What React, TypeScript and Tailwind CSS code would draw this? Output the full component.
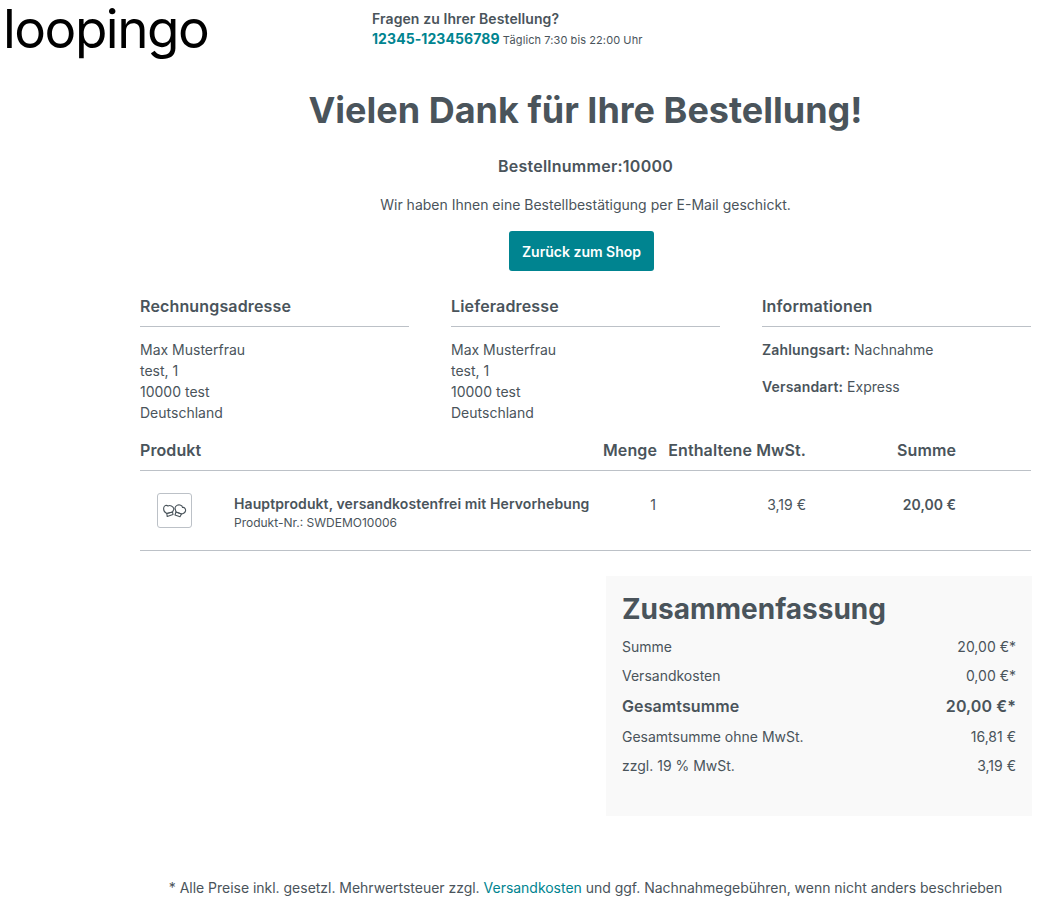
import React from "react";

function Mittens() {
  return (
    <svg viewBox="0 0 24 14" className="h-[14px] w-[24px]" fill="none" stroke="#4a545b" strokeWidth="1.1" strokeLinejoin="round" strokeLinecap="round">
      <path d="M3.8 9.5 C1.5 8.5 0.3 6 0.8 3.5 C1.2 1.5 3.5 0.8 5 2 C7 0.8 10 2 11 5 L9.5 8 Z" />
      <path d="M3.8 9.5 L9.5 8 L10 10.5 L4.2 12.5 Z" />
      <path d="M13 8 L12 4 C12.5 1.5 15 0.5 17 1 C19 1.5 19.5 3 19.5 3.5 C21.5 3 23 5 22.5 7 C22 9 19.5 10 18.5 10 Z" />
      <path d="M13 8 L18.5 10 L17 12.8 L12 11 Z" />
    </svg>
  );
}

function Address({ title }: { title: string }) {
  return (
    <div>
      <h3 className="border-b border-[#bcc1c7] pb-[8px] text-[16px] leading-[24px] font-semibold tracking-[0.15px]">{title}</h3>
      <div className="mt-[12px] text-[14px] leading-[21px]">
        <p>Max Musterfrau</p>
        <p>test, 1</p>
        <p>10000 test</p>
        <p>Deutschland</p>
      </div>
    </div>
  );
}

function SummaryRow({ label, value }: { label: string; value: string }) {
  return (
    <div className="flex h-[29px] items-center justify-between text-[14px]">
      <span>{label}</span>
      <span>{value}</span>
    </div>
  );
}

export default function App() {
  return (
    <div className="h-[905px] overflow-hidden bg-white text-[#4a545b]" style={{ fontFamily: "Inter, sans-serif" }}>
      {/* header */}
      <div className="flex h-[70px]">
        <div className="ml-[3px] w-[369px] text-[53px] leading-[58px] font-normal tracking-[-1.5px] text-black">
          loopingo
        </div>
        <div className="pt-[8px]">
          <p className="text-[14px] leading-[21px] font-semibold tracking-[0.09px]">Fragen zu Ihrer Bestellung?</p>
          <p className="text-[11px] leading-[20px] tracking-[0.09px]">
            <a className="text-[14px] font-bold tracking-[0.08px] text-[#008490]">12345-123456789</a> Täglich 7:30 bis 22:00 Uhr
          </p>
        </div>
      </div>

      <div className="ml-[140px] w-[891px]">
        {/* thanks */}
        <div className="text-center">
          <h1 className="mt-[16px] text-[36px] leading-[48px] font-bold">Vielen Dank für Ihre Bestellung!</h1>
          <p className="mt-[20px] text-[16px] leading-[24px] font-semibold tracking-[0.25px]">Bestellnummer:10000</p>
          <p className="mt-[16px] text-[14px] leading-[21px]">Wir haben Ihnen eine Bestellbestätigung per E-Mail geschickt.</p>
          <a className="mt-[16px] mr-[8px] inline-flex h-[40px] w-[145px] items-center justify-center rounded-[3px] bg-[#008490] text-[14px] font-semibold text-white">
            Zurück zum Shop
          </a>
        </div>

        {/* addresses */}
        <div className="mt-[23px] grid grid-cols-3 gap-[42px]">
          <Address title="Rechnungsadresse" />
          <Address title="Lieferadresse" />
          <div>
            <h3 className="border-b border-[#bcc1c7] pb-[8px] text-[16px] leading-[24px] font-semibold tracking-[0.15px]">Informationen</h3>
            <p className="mt-[12px] text-[14px] leading-[21px]">
              <b className="font-semibold tracking-[0.15px]">Zahlungsart:</b> Nachnahme
            </p>
            <p className="mt-[16px] text-[14px] leading-[21px]">
              <b className="font-semibold tracking-[0.15px]">Versandart:</b> Express
            </p>
          </div>
        </div>

        {/* products */}
        <div className="mt-[15px] grid h-[33px] grid-cols-[463px_54px_149px_150px_75px] border-b border-[#bcc1c7] text-[16px] leading-[24px] font-semibold tracking-[0.1px]">
          <span className="col-span-1">Produkt</span>
          <span className="text-right whitespace-nowrap">Menge</span>
          <span className="text-right whitespace-nowrap">Enthaltene MwSt.</span>
          <span className="text-right">Summe</span>
        </div>
        <div className="grid h-[80px] grid-cols-[463px_54px_149px_150px_75px] items-center border-b border-[#bcc1c7] text-[14px]">
          <div className="flex items-center">
            <div className="ml-[17px] flex h-[35px] w-[35px] items-center justify-center rounded-[3px] border border-[#bcc1c7]">
              <Mittens />
            </div>
            <div className="ml-[42px] pt-[3px] whitespace-nowrap">
              <p className="leading-[21px] font-semibold tracking-[0.1px]">Hauptprodukt, versandkostenfrei mit Hervorhebung</p>
              <p className="text-[12px] leading-[17px]">Produkt-Nr.: SWDEMO10006</p>
            </div>
          </div>
          <span className="mb-[13px] pr-[1px] text-right">1</span>
          <span className="mb-[13px] text-right">3,19 €</span>
          <span className="mb-[13px] text-right font-semibold">20,00 €</span>
        </div>

        {/* summary */}
        <div className="mt-[25px] ml-[466px] h-[240px] w-[426px] bg-[#f9f9f9] px-[16px] pt-[16px]">
          <h2 className="text-[28px] leading-[34px] font-bold">Zusammenfassung</h2>
          <div className="mt-[6px]">
            <SummaryRow label="Summe" value="20,00 €*" />
            <SummaryRow label="Versandkosten" value="0,00 €*" />
            <div className="flex h-[32px] items-center justify-between text-[16px] font-semibold tracking-[0.1px]">
              <span>Gesamtsumme</span>
              <span>20,00 €*</span>
            </div>
            <SummaryRow label="Gesamtsumme ohne MwSt." value="16,81 €" />
            <SummaryRow label="zzgl. 19 % MwSt." value="3,19 €" />
          </div>
        </div>

        {/* footer note */}
        <p className="mt-[61px] text-center text-[14px] leading-[21px] tracking-[-0.02px] whitespace-nowrap">
          * Alle Preise inkl. gesetzl. Mehrwertsteuer zzgl. <a className="text-[#008490]">Versandkosten</a> und ggf. Nachnahmegebühren, wenn nicht anders beschrieben
        </p>
      </div>
    </div>
  );
}
